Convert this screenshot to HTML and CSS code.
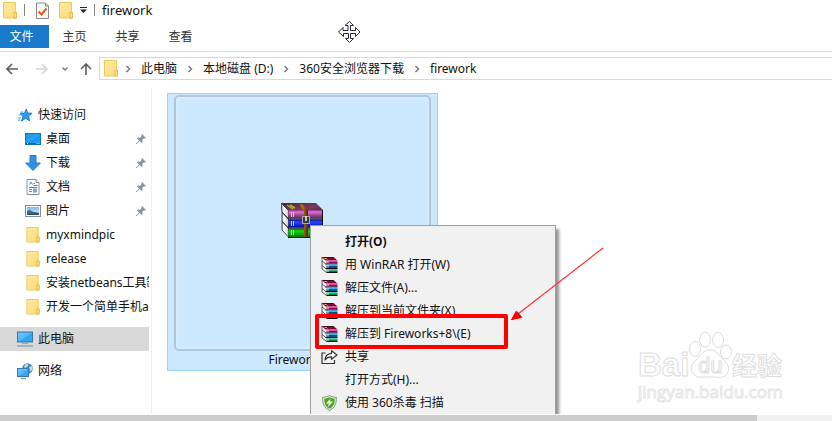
FILE: index.html
```html
<!DOCTYPE html>
<html lang="zh-CN">
<head>
<meta charset="utf-8">
<title>firework</title>
<link rel="stylesheet" href="styles.css">
</head>
<body>
<svg class="defs" aria-hidden="true">
  <defs>
    <linearGradient id="g-folder" x1="0" y1="0" x2="1" y2="1"><stop offset="0" stop-color="#ffe9a2"/><stop offset="1" stop-color="#fddc78"/></linearGradient>
    <linearGradient id="g-screen" x1="0" y1="0" x2="1" y2="1"><stop offset="0" stop-color="#6cc8fb"/><stop offset=".5" stop-color="#52b8fa"/><stop offset=".55" stop-color="#2fa5f7"/><stop offset="1" stop-color="#35a9f8"/></linearGradient>
    <linearGradient id="g-desk" x1="0" y1="0" x2="1" y2="1"><stop offset="0" stop-color="#1a94e6"/><stop offset=".5" stop-color="#27a4f5"/><stop offset=".55" stop-color="#159af2"/><stop offset="1" stop-color="#1d9ff5"/></linearGradient>
    <linearGradient id="g-sky" x1="0" y1="0" x2="0" y2="1"><stop offset="0" stop-color="#7fb8f0"/><stop offset="1" stop-color="#e6f3fc"/></linearGradient>
    <linearGradient id="g-purple" x1="0" y1="0" x2="0" y2="1"><stop offset="0" stop-color="#8a3b80"/><stop offset=".25" stop-color="#e070d8"/><stop offset=".6" stop-color="#9a4a8c"/><stop offset="1" stop-color="#5c2a52"/></linearGradient>
    <linearGradient id="g-top" x1="0" y1="0" x2="1" y2="1"><stop offset="0" stop-color="#4a2430"/><stop offset=".6" stop-color="#7c3a60"/><stop offset="1" stop-color="#4a2430"/></linearGradient>
    <linearGradient id="g-blue" x1="0" y1="0" x2="0" y2="1"><stop offset="0" stop-color="#0a0a90"/><stop offset=".3" stop-color="#2a48ff"/><stop offset="1" stop-color="#0505a0"/></linearGradient>
    <linearGradient id="g-green" x1="0" y1="0" x2="0" y2="1"><stop offset="0" stop-color="#067006"/><stop offset=".3" stop-color="#10d810"/><stop offset="1" stop-color="#067806"/></linearGradient>
    <linearGradient id="g-belt" x1="0" y1="0" x2="1" y2="0"><stop offset="0" stop-color="#5a3206"/><stop offset=".45" stop-color="#b87420"/><stop offset="1" stop-color="#4c2a04"/></linearGradient>
    <linearGradient id="g-pages" x1="0" y1="0" x2="1" y2="0"><stop offset="0" stop-color="#9a9aac"/><stop offset=".4" stop-color="#ffffff"/><stop offset="1" stop-color="#c4c4d2"/></linearGradient>
  </defs>
  <symbol id="folder" viewBox="0 0 14 17">
    <path d="M.5.5h12v10h1v5.500h-13z" fill="url(#g-folder)" stroke="#ecc958"/>
    <path d="M12.500 10.500h-1.500v5.500h2.500v-5.500z" fill="#fbe08a" stroke="#e3bb42"/>
  </symbol>
  <symbol id="doc-check" viewBox="0 0 13 17">
    <path d="M.5 1h9l3 3v12.500H.5z" fill="#f8f8f8" stroke="#8a8a8a"/>
    <path d="M9.500 1v3h3" fill="none" stroke="#8a8a8a"/>
    <path d="M2.500 9.500l3 3 5-6" fill="none" stroke="#e8591c" stroke-width="2"/>
  </symbol>
  <symbol id="chev" viewBox="0 0 6 8"><path d="M1.500 1l3 3-3 3" fill="none" stroke="#767676" stroke-width="1.400"/></symbol>
  <symbol id="pin" viewBox="0 0 10 10">
    <path d="M6 0l4 4-1.200.6L8 4.200 6.300 6l.2 2.200-.9.800L3.600 7 .6 10H0v-.6L3 6.400 1 4.400l.8-.9L4 3.700 5.800 2l-.4-.8z" fill="#8695a0"/>
  </symbol>
  <symbol id="star" viewBox="0 0 14 14">
    <path d="M8.200 1.800l1.100 3.500 3.900.2-3.100 2.400.9 4.200-3.400-2.300-3.700 2.600 1.400-4.200L2.700 6l3.700-.4z" fill="#2a9df0" stroke="#1677c4" stroke-width=".8"/>
    <path d="M3 4.500h2.500M1.500 7H3M1.200 9.500h2M.8 11.500h2.200" stroke="#58aee8"/>
  </symbol>
  <symbol id="desktop" viewBox="0 0 16 12"><rect x=".5" y=".5" width="15" height="11" fill="url(#g-desk)" stroke="#1574b8"/><path d="M1 10.500h14" stroke="#0d5a9a"/><path d="M2 10.500h1M11.500 10.500h1M13.500 10.500h1" stroke="#fff"/></symbol>
  <symbol id="down" viewBox="0 0 16 16"><path d="M5 .5h6v7.500h4.300L8 15.500.7 8H5z" fill="#3390e8" stroke="#2a78c8"/></symbol>
  <symbol id="text" viewBox="0 0 13 16">
    <path d="M.5.5h9l3 3v12H.5z" fill="#fff" stroke="#8b8f93"/><path d="M9.500.5v3h3" fill="#eee" stroke="#8b8f93"/>
    <path d="M3 5.500l1.500-2.500 1.500 2.500M7 4.500h1.500M7 6.500h4M2.500 8.500h8M2.500 10.500h3M2.500 12.500h3" fill="none" stroke="#3a8fd0"/><rect x="6.500" y="9.500" width="4" height="4" fill="#76aed6"/>
  </symbol>
  <symbol id="picture" viewBox="0 0 16 12">
    <rect x=".5" y=".5" width="15" height="11" fill="#fff" stroke="#8b8f93"/><rect x="2" y="2" width="12" height="8" fill="url(#g-sky)"/>
    <path d="M2 6c2-2 4-1 5.500.5L14 8v2H2z" fill="#41718c"/><path d="M2 8.500l12-.5v2H2z" fill="#2a5278"/>
  </symbol>
  <symbol id="pc" viewBox="0 0 16 15"><rect x=".5" y=".5" width="15" height="10" fill="url(#g-screen)" stroke="#41749c"/><path d="M5 12h6" stroke="#9aa7b2"/><path d="M0 14.500h16" stroke="#7089a3"/></symbol>
  <symbol id="network" viewBox="0 0 16 16">
    <circle cx="10.500" cy="5.500" r="5.300" fill="#3f86ad"/><path d="M8 1.500c2-1.500 4 0 3 1.500S8 5 7 4.500zM12 4l3-1 .5 3-2 3z" fill="#c0dfec"/>
    <rect x=".5" y="5.500" width="11" height="8" fill="url(#g-screen)" stroke="#377aad"/><path d="M4 15.500h5" stroke="#7089a3"/>
  </symbol>
  <symbol id="rar" viewBox="0 0 16 16">
    <path d="M0 0l5 4.500V16l-5-4z" fill="#f4f4f8"/>
    <path d="M.5 0v12M.5 4L5 7.500M.5 8.500L5 12M.5 12L5 15.500" fill="none" stroke="#333" stroke-width=".8"/>
    <path d="M0 0h12l4 3.500H4z" fill="#7a0c38"/><path d="M2 .5h10" stroke="#3c0c18"/>
    <path d="M3 1.500h2l1 1" stroke="#e0c020" fill="none"/>
    <path d="M5 3.500h11V5H5z" fill="#f040b0"/><path d="M5 5h11v1.500H5z" fill="#900858"/>
    <path d="M4 7h12M4 11.500h12M5 15.500h11" stroke="#101018"/>
    <path d="M5 7.500h11V9H5z" fill="#38b0f0"/><path d="M5 9h11v2H5z" fill="#0a4c98"/>
    <path d="M5 12h11v1.500H5z" fill="#38d090"/><path d="M5 13.500h11V15H5z" fill="#067048"/>
    <path d="M6.500 4v2M6.500 8v2.500M6.500 12.500V15" stroke="#f4e8a0"/>
  </symbol>
  <symbol id="share" viewBox="0 0 17 14">
    <path d="M4.500 3H1v10.500h12.500V10" fill="none" stroke="#333" stroke-width="1.200"/>
    <path d="M10.500.8L16 5l-5.500 4.300V6.800C7.500 6.700 5.500 7.800 4 10c.3-4 2.800-6.300 6.500-6.600z" fill="#fff" stroke="#333" stroke-width="1.200" stroke-linejoin="round"/>
  </symbol>
  <symbol id="shield" viewBox="0 0 15 16">
    <path d="M7.500.5C9.500 1.800 12 2.300 14.300 2.300c.3 6-1.300 10.500-6.800 13.200C2 12.800.4 8.300.7 2.300 3 2.300 5.500 1.800 7.500.5z" fill="#e4ece0" stroke="#7f9480"/>
    <path d="M7.500 2.200c1.700.9 3.300 1.400 5.200 1.500 0 4.700-1.200 7.900-5.200 10.100-4-2.200-5.200-5.400-5.200-10.100 1.900-.1 3.500-.6 5.200-1.500z" fill="#45a51c"/>
    <path d="M8.500 3.500L4 8.500h3L5.500 12.500l5.500-6H8z" fill="#fff"/>
  </symbol>
</svg>

<div class="window">
  <header class="titlebar">
    <svg class="i-folder"><use href="#folder"/></svg>
    <i class="sep"></i>
    <button class="tool" aria-label="属性"><svg class="i-check"><use href="#doc-check"/></svg></button>
    <button class="tool" aria-label="新建文件夹"><svg class="i-folder"><use href="#folder"/></svg></button>
    <button class="tool" aria-label="自定义"><svg class="i-more" viewBox="0 0 7 6"><path d="M0 .5h7" stroke="#222"/><path d="M0 2.500h7L3.500 6z" fill="#222"/></svg></button>
    <i class="sep"></i>
    <h1 class="title">firework</h1>
  </header>

  <nav class="ribbon">
    <button class="tab tab-active">文件</button>
    <button class="tab">主页</button>
    <button class="tab">共享</button>
    <button class="tab">查看</button>
  </nav>

  <div class="address">
    <div class="history">
      <button class="tool" aria-label="后退"><svg class="i-arrow" viewBox="0 0 12 12"><path d="M12 6H1M6 1L1 6l5 5" fill="none" stroke="#5e5e5e" stroke-width="1.600"/></svg></button>
      <button class="tool" aria-label="前进"><svg class="i-arrow" viewBox="0 0 12 12"><path d="M0 6h11M6 1l5 5-5 5" fill="none" stroke="#d6d6d6" stroke-width="1.600"/></svg></button>
      <button class="tool" aria-label="最近位置"><svg class="i-small" viewBox="0 0 6 6"><path d="M.5 1.500L3 4l2.500-2.500" fill="none" stroke="#777" stroke-width="1.400"/></svg></button>
      <button class="tool" aria-label="上移"><svg class="i-arrow" viewBox="0 0 12 12"><path d="M6 12V1M1 6l5-5 5 5" fill="none" stroke="#5e5e5e" stroke-width="1.600"/></svg></button>
    </div>
    <div class="crumbs">
      <svg class="i-folder"><use href="#folder"/></svg>
      <svg class="i-chev"><use href="#chev"/></svg><a href="#">此电脑</a>
      <svg class="i-chev"><use href="#chev"/></svg><a href="#">本地磁盘 (D:)</a>
      <svg class="i-chev"><use href="#chev"/></svg><a href="#">360安全浏览器下载</a>
      <svg class="i-chev"><use href="#chev"/></svg><a href="#">firework</a>
    </div>
  </div>

  <main class="body">
    <nav class="tree">
      <a class="node root" href="#"><svg class="i-node"><use href="#star"/></svg><span>快速访问</span></a>
      <a class="node" href="#"><svg class="i-node"><use href="#desktop"/></svg><span>桌面</span><svg class="i-pin"><use href="#pin"/></svg></a>
      <a class="node" href="#"><svg class="i-node"><use href="#down"/></svg><span>下载</span><svg class="i-pin"><use href="#pin"/></svg></a>
      <a class="node" href="#"><svg class="i-node"><use href="#text"/></svg><span>文档</span><svg class="i-pin"><use href="#pin"/></svg></a>
      <a class="node" href="#"><svg class="i-node"><use href="#picture"/></svg><span>图片</span><svg class="i-pin"><use href="#pin"/></svg></a>
      <a class="node" href="#"><svg class="i-node"><use href="#folder"/></svg><span>myxmindpic</span></a>
      <a class="node" href="#"><svg class="i-node"><use href="#folder"/></svg><span>release</span></a>
      <a class="node" href="#"><svg class="i-node"><use href="#folder"/></svg><span>安装netbeans工具缺</span></a>
      <a class="node" href="#"><svg class="i-node"><use href="#folder"/></svg><span>开发一个简单手机a</span></a>
      <a class="node root place current" href="#"><svg class="i-node"><use href="#pc"/></svg><span>此电脑</span></a>
      <a class="node root place" href="#"><svg class="i-node"><use href="#network"/></svg><span>网络</span></a>
    </nav>

    <section class="files">
      <figure class="file">
        <div class="thumb">
          <svg class="i-rar" viewBox="0 0 42 35">
            <path d="M0 0h35l7 7v2H7z" fill="url(#g-top)"/>
            <path d="M0 0l7.500 7.500v8L1 9zM1 9.500l6.500 7v8.500L1 18zM1 18.500l6.500 7V34L1 27z" fill="url(#g-pages)" stroke="#26262e" stroke-width=".8"/>
            <rect x="7.500" y="7" width="34" height="8.500" fill="url(#g-purple)"/><rect x="7.500" y="16.500" width="34" height="8" fill="url(#g-blue)"/><rect x="7.500" y="25.500" width="34" height="8.500" fill="url(#g-green)"/>
            <path d="M7 16h35M7 25h35M7 34.500h35M41.500 7v28" stroke="#0c0c14"/>
            <path d="M6 2l6 4M9 2l5 3" stroke="#b8b020" stroke-width="1.500"/>
            <path d="M10.500 9v5M12.500 9v5M10.500 18v5M12.500 18v5M10.500 27v5M12.500 27v5" stroke="#e6d84c"/>
            <path d="M17 1h4l6 6v27h-4V8z" fill="url(#g-belt)"/>
            <rect x="21.500" y="13.500" width="7" height="7" fill="#3c3c3c" stroke="#a8a8a8"/><path d="M25 13v5" stroke="#eee" stroke-width="1.500"/>
          </svg>
        </div>
        <figcaption>Fireworks+8</figcaption>
      </figure>
    </section>

    <div class="menu" role="menu">
      <button class="item default" role="menuitem"><i></i>打开(O)</button>
      <button class="item" role="menuitem"><svg><use href="#rar"/></svg>用 WinRAR 打开(W)</button>
      <button class="item" role="menuitem"><svg><use href="#rar"/></svg>解压文件(A)...</button>
      <button class="item" role="menuitem"><svg><use href="#rar"/></svg>解压到当前文件夹(X)</button>
      <button class="item marked" role="menuitem"><svg><use href="#rar"/></svg>解压到 Fireworks+8\(E)</button>
      <button class="item" role="menuitem"><svg><use href="#share"/></svg>共享</button>
      <button class="item" role="menuitem"><i></i>打开方式(H)...</button>
      <button class="item" role="menuitem"><svg><use href="#shield"/></svg>使用 360杀毒 扫描</button>
    </div>
  </main>

  <div class="scroll"><div class="scroll-thumb"></div></div>

  <svg class="cursor" viewBox="0 0 24 24" aria-hidden="true"><path d="M12.500 1.500l4 4h-3v5h5v-3l4.500 4.500-4.500 4.500v-3h-5v5h3l-4 4-4-4h3v-5h-5v3L1.500 12l4.500-4.500v3h5v-5h-3z" fill="#fff" stroke="#26263c"/></svg>
  <svg class="pointer" viewBox="0 0 94 74" aria-hidden="true"><path d="M93 1L8 67" stroke="#f33" stroke-width="1.200"/><path d="M1 73l5-9 6 6z" fill="red"/><path d="M1 73L6 64l6 7z" fill="red"/><path d="M1 73L7 64l5 6z" fill="red"/></svg>
  <svg class="watermark" viewBox="0 0 150 74" aria-hidden="true">
    <g class="mark">
      <text class="wm-bai" x="1" y="45">Bai</text>
      <ellipse cx="58" cy="18" rx="5.500" ry="7.500"/><ellipse cx="68" cy="8.500" rx="5.500" ry="7.500"/><ellipse cx="81" cy="9" rx="5.500" ry="7.500"/><ellipse cx="89" cy="21" rx="5.500" ry="7"/>
      <path d="M73 19c6 0 9 5 13 9s7 8 5 13-7 6-12 5h-13c-5 1-9-1-11-5s0-8 4-12 7-10 14-10z"/>
      <text class="wm-du" x="61" y="42">du</text>
      <text class="wm-cn" x="95" y="44">经验</text>
      <text class="wm-url" x="1" y="67">jingyan.baidu.com</text>
    </g>
  </svg>
</div>
</body>
</html>
```

FILE: styles.css
```css
* { box-sizing: border-box; }

body {
  margin: 0;
  background: #fff;
  color: #111;
  font: 12px/16px "Noto Sans", "Noto Sans CJK SC", sans-serif;
}

.defs { position: absolute; width: 0; height: 0; }
svg { display: block; flex: none; }
a { color: inherit; text-decoration: none; }
button { border: 0; padding: 0; background: none; color: inherit; font: inherit; }

.window {
  position: relative;
  display: flex;
  flex-direction: column;
  height: 100vh;
  overflow: hidden;
}

.i-folder { width: 14px; height: 17px; }
.i-check { width: 13px; height: 17px; }
.i-more { width: 7px; height: 6px; }
.i-arrow { width: 12px; height: 12px; }
.i-small { width: 6px; height: 6px; }
.i-chev { width: 6px; height: 8px; }

/* title bar */
.titlebar { display: flex; align-items: center; gap: 7px; height: 20px; padding-left: 3px; }
.titlebar .sep { width: 1px; height: 12px; background: #888; }
.titlebar .sep + .tool { margin: 0 3px 0 4px; }
.title { margin: 0; font-size: 13px; font-weight: 400; }

/* ribbon tabs */
.ribbon { display: flex; gap: 4px; height: 32px; padding-top: 5px; border-bottom: 1px solid #dadada; }
.tab { width: 49px; height: 23px; padding-right: 6px; color: #333; }
.tab-active { background: #1979ca; color: #fff; }

/* address bar */
.address { display: flex; align-items: center; padding-top: 5px; }
.history { display: flex; align-items: center; gap: 14px; width: 99px; padding-left: 6px; }
.history .tool + .tool { margin-left: 4px; }
.history .tool:nth-child(3) { margin: 0 -2px 0 0; }
.history .tool:nth-child(4) { margin: 0; }
.crumbs {
  display: flex;
  flex: 1;
  align-items: center;
  gap: 10px;
  height: 23px;
  padding-left: 4px;
  border: 1px solid #d9d9d9;
  border-right: 0;
}
.crumbs .i-folder { margin-right: -3px; }

/* content area */
.body { position: relative; display: flex; flex: 1; min-height: 0; margin-top: 8px; overflow: hidden; }

.tree { flex: none; width: 152px; padding: 15px 2px 0 0; border-right: 1px solid #f0f0f0; }
.node { display: flex; align-items: center; gap: 5px; height: 24px; padding-left: 25px; white-space: nowrap; overflow: hidden; }
.node span { flex: 1; min-width: 0; overflow: hidden; }
.node .i-node { width: 16px; height: 16px; }
.node.root { padding-left: 17px; }
.node.place { margin-top: 8px; }
.current { background: #d9d9d9; }
.i-pin { width: 10px; height: 10px; margin-right: 3px; }

.files { flex: 1; padding: 5px 15px; }
.file {
  width: 271px;
  margin: 0;
  padding: 1px 6px;
  border: 1px solid #99d1ff;
  background: #cce8ff;
}
.thumb {
  display: flex;
  align-items: center;
  justify-content: center;
  height: 256px;
  padding: 0 2px 6px 0;
  border: 2px solid #afc6dc;
  border-radius: 5px;
  box-shadow: inset 0 0 4px #e6f3ff;
}
.i-rar { width: 42px; height: 35px; }
figcaption { text-align: center; line-height: 18px; }

/* context menu */
.menu {
  position: absolute;
  top: 137px;
  left: 310px;
  width: 246px;
  padding: 4px 0 40px;
  border: 1px solid #a0a0a0;
  background: #f1f1f1;
  box-shadow: 3px 4px 3px #00000070;
}
.item { display: flex; align-items: center; gap: 7px; width: 100%; height: 23px; padding-left: 10px; text-align: left; white-space: nowrap; }
.item svg, .item i { width: 17px; height: 16px; }
.default { font-weight: 700; }
.marked { position: relative; }
.marked::after {
  content: "";
  position: absolute;
  inset: -8px 47px -4px 4px;
  border: 4px solid #f00;
  border-radius: 2px;
}

/* horizontal scroll bar */
.scroll { flex: none; height: 6px; margin-top: 1px; background: #f0f0f0; }
.scroll-thumb { width: 91%; height: 100%; background: #cdcdcd; }

/* overlays */
.cursor { position: absolute; top: 20px; left: 337px; width: 24px; height: 24px; }
.pointer { position: absolute; top: 247px; left: 510px; width: 94px; height: 74px; }
.watermark { position: absolute; top: 331px; left: 637px; width: 150px; height: 74px; overflow: visible; }
.mark { fill: #fff; stroke: #dedede; stroke-width: 1px; font-family: "Liberation Sans", "Noto Sans CJK SC", sans-serif; font-weight: 700; }
.wm-bai { font-size: 33px; }
.wm-du { font-size: 22px; font-weight: 400; }
.wm-cn { font-size: 25px; }
.wm-url { font-family: "Open Sans", sans-serif; font-size: 17px; font-weight: 400; stroke: #e6e6e6; }
```
